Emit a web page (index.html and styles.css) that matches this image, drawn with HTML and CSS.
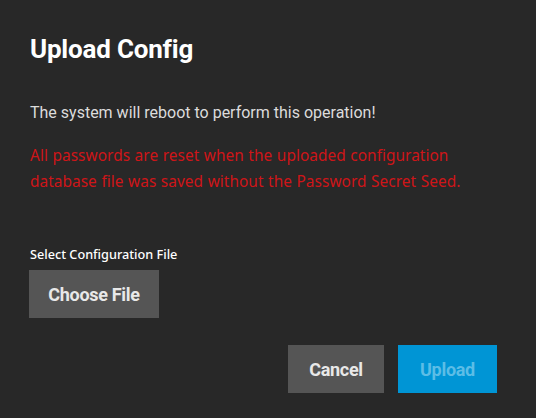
FILE: index.html
```html
<!DOCTYPE html>
<html>
<head>
<meta charset="utf-8">
<link rel="stylesheet" href="styles.css">
</head>
<body>
<div class="dialog">
  <h1 class="title">Upload Config</h1>
  <p class="info">The system will reboot to perform this operation!</p>
  <p class="warn">All passwords are reset when the uploaded configuration database file was saved without the Password Secret Seed.</p>
  <div class="field">
    <label class="label">Select Configuration File</label>
    <button class="btn btn-gray choose">Choose File</button>
  </div>
  <div class="actions">
    <button class="btn btn-gray cancel">Cancel</button>
    <button class="btn btn-blue upload">Upload</button>
  </div>
</div>
</body>
</html>
```
FILE: styles.css
```css
html, body {
  margin: 0;
  padding: 0;
  background: #282828;
  height: 100%;
}
.dialog {
  padding: 30px 26px 0 30px;
  font-family: Roboto, "Liberation Sans", sans-serif;
  color: #e0e0e0;
}
.title {
  margin: 0;
  padding-top: 5px;
  font-size: 26px;
  line-height: 28px;
  font-weight: 700;
  color: #ffffff;
  letter-spacing: -0.2px;
}
.info {
  margin: 40px 0 0 0;
  font-size: 16px;
  line-height: 20px;
  color: #dcdcdc;
}
.warn {
  margin: 20px 0 0 0;
  padding-right: 10px;
  font-family: "Noto Sans", sans-serif;
  font-size: 15.4px;
  letter-spacing: 0.05px;
  word-spacing: 0.5px;
  line-height: 26px;
  color: #cf1518;
}
.field {
  margin-top: 51px;
  display: flex;
  flex-direction: column;
  align-items: flex-start;
}
.label {
  font-family: "Noto Sans", sans-serif;
  font-size: 12.7px;
  line-height: 16px;
  font-weight: 500;
  color: #ffffff;
  margin-bottom: 8px;
}
.btn {
  border: 0;
  font-family: Roboto, "Liberation Sans", sans-serif;
  font-size: 18px;
  font-weight: 700;
  letter-spacing: -0.3px;
  height: 48px;
  padding: 0;
}
.btn-gray {
  background: #555555;
  color: #e8e8e8;
}
.btn-blue {
  background: #0095d5;
  color: #5cbde6;
}
.choose {
  width: 130px;
  margin-left: -1px;
}
.actions {
  margin-top: 27px;
  display: flex;
  justify-content: flex-end;
  gap: 14px;
  padding-right: 13px;
}
.cancel { width: 96px; }
.upload { width: 99px; }
```
